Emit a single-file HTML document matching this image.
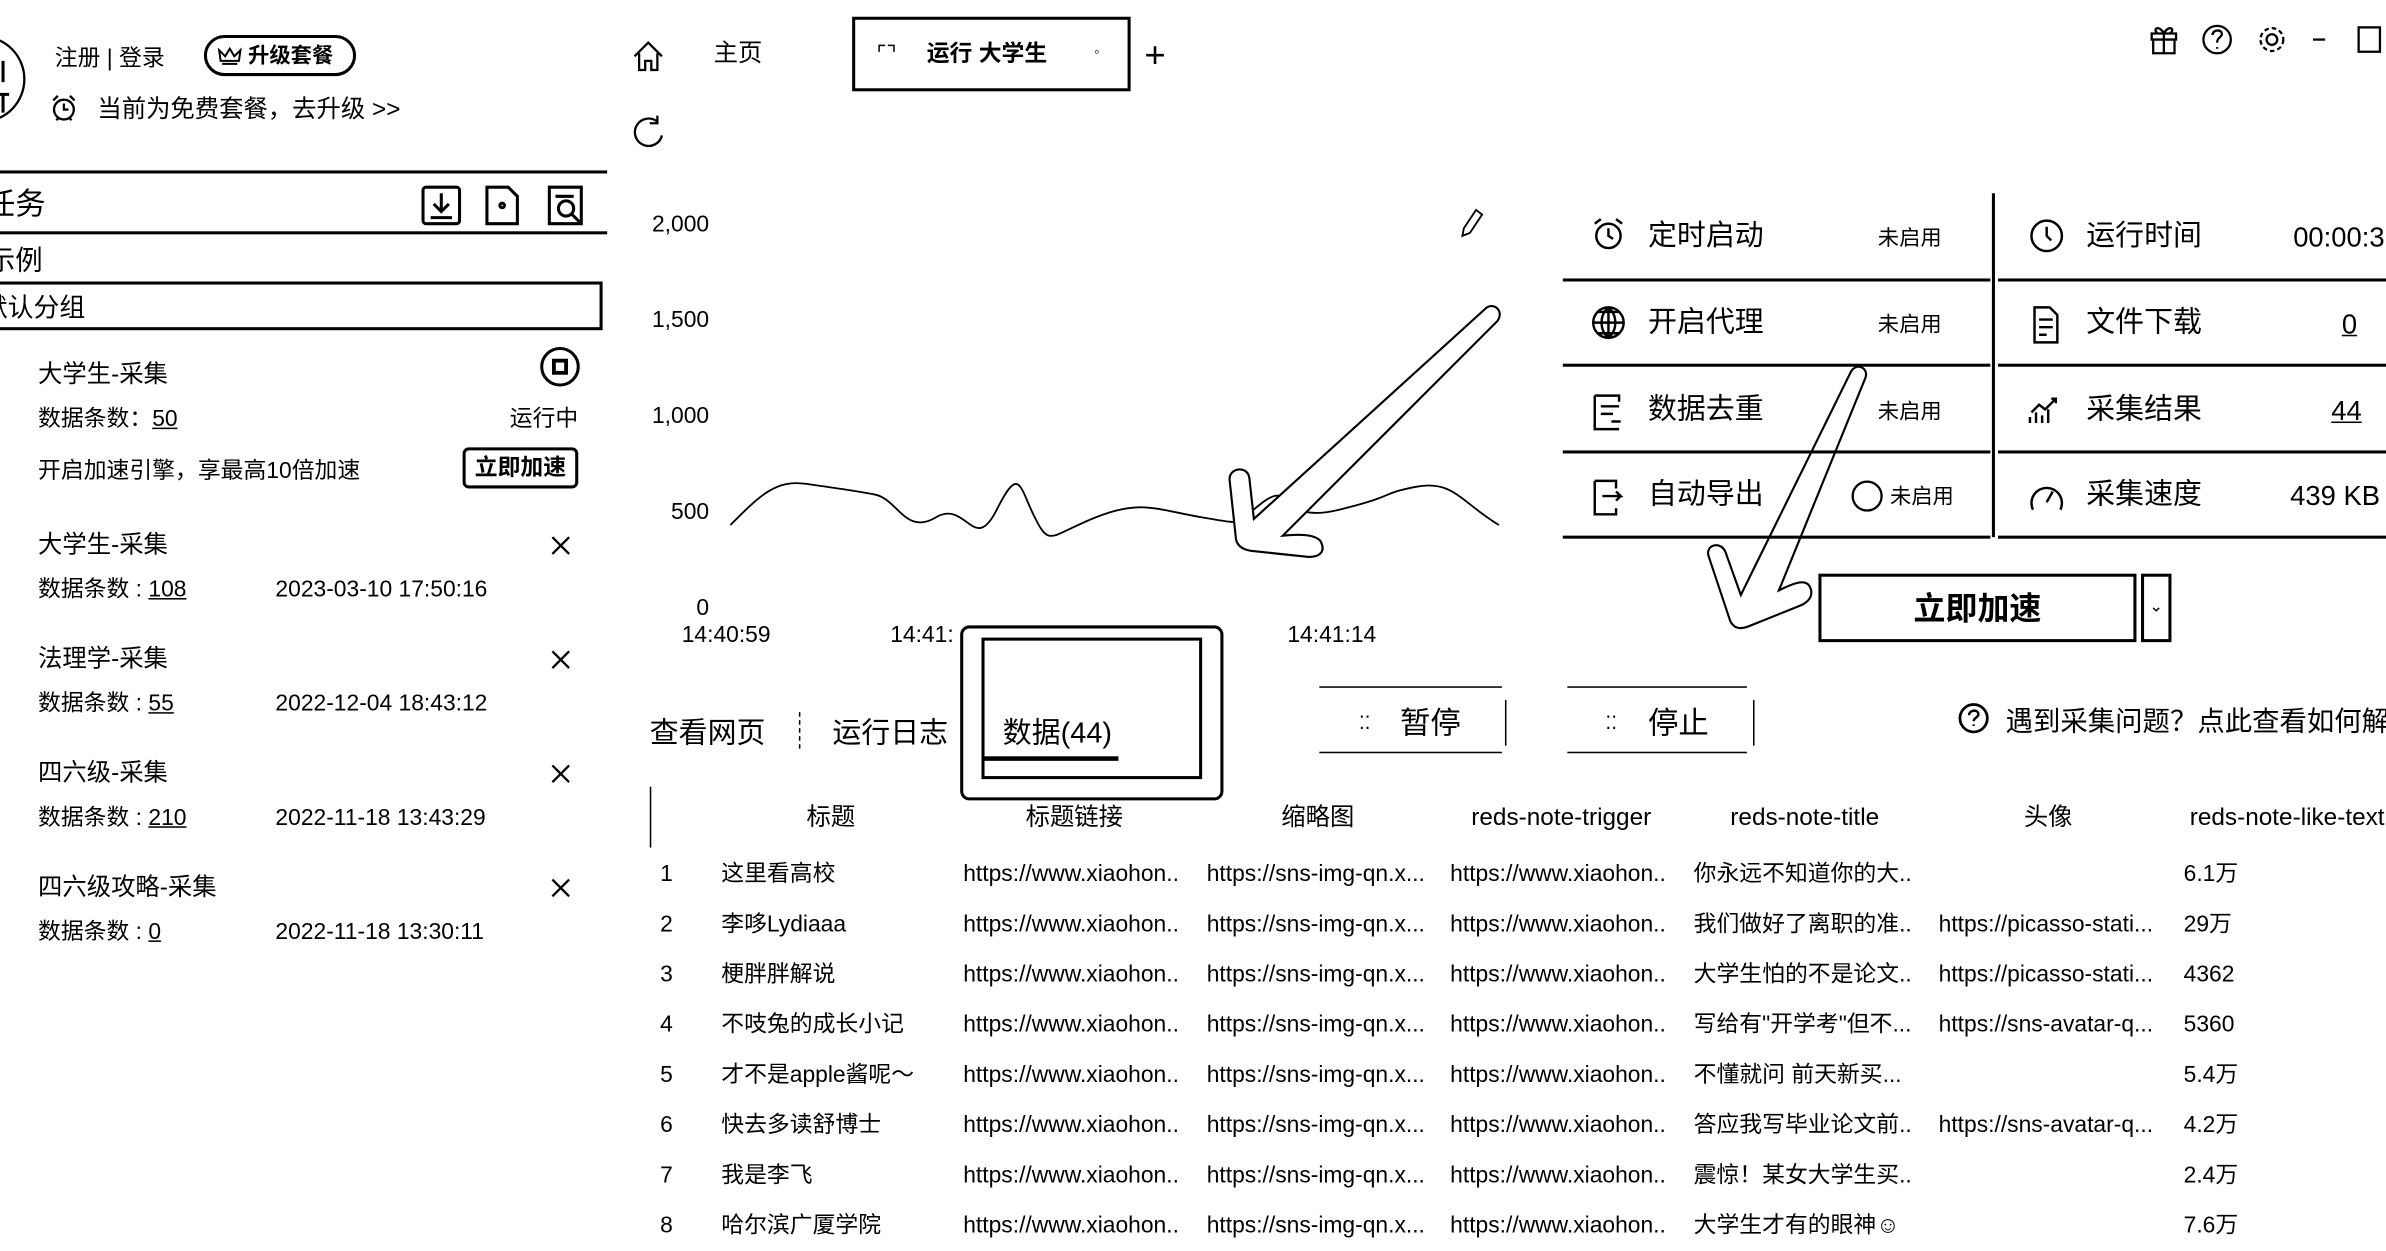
<!DOCTYPE html>
<html><head><meta charset="utf-8"><style>
html,body{margin:0;padding:0;background:#fff;overflow:hidden;width:2386px;height:1249px}
#w{position:absolute;left:0;top:0;width:1568px;height:821px;transform:scale(1.5217);transform-origin:0 0;font-family:"Liberation Sans","Noto Sans CJK SC",sans-serif;color:#000}
.a{position:absolute;white-space:nowrap;line-height:1}
.l{position:absolute;background:#000}
.u{text-decoration:underline}
svg{position:absolute;overflow:visible}
.t{font-size:15px}
</style></head><body><div id="w">
<!-- left panel -->
<svg style="left:0;top:0" width="20" height="90"><circle cx="-12" cy="52" r="28" fill="none" stroke="#000" stroke-width="1.5"/><path d="M2 40v14M2 62v12M0 62h6" stroke="#000" stroke-width="2" fill="none"/></svg>
<div class="a" style="left:36px;top:31px;font-size:15px">注册 | 登录</div>
<div class="a" style="left:134px;top:23px;width:100px;height:27px;border:2px solid #000;border-radius:15px;box-sizing:border-box"></div>
<svg style="left:143px;top:30px" width="16" height="14"><path d="M1 3l4 4 3-5 3 5 4-4-1 7H2z M3 12h10" stroke="#000" stroke-width="1.3" fill="none"/></svg>
<div class="a" style="left:163px;top:29px;font-size:14px;font-weight:bold">升级套餐</div>
<svg style="left:33px;top:62px" width="18" height="18"><circle cx="9" cy="10" r="6.5" fill="none" stroke="#000" stroke-width="1.5"/><path d="M9 6v4h3M2 4l3-3M16 4l-3-3M4 17l2-2M14 17l-2-2" stroke="#000" stroke-width="1.5" fill="none"/></svg>
<div class="a" style="left:64px;top:65px;font-size:16px">当前为免费套餐，去升级 &gt;&gt;</div>
<div class="l" style="left:0;top:112px;width:399px;height:2px"></div>
<div class="a" style="left:-10px;top:125px;font-size:20px">任务</div>
<svg style="left:277px;top:121px" width="110" height="28" fill="none" stroke="#000" stroke-width="2"><rect x="1" y="2" width="24" height="24" rx="2"/><path d="M13 6v12M8 13l5 5 5-5M6 22h14"/><path d="M43 2h14l6 6v18H43z"/><circle cx="53" cy="14" r="1.5"/><path d="M84 2h21v24H84z M88 8h12"/><circle cx="95" cy="16" r="5"/><path d="M99 20l5 5"/></svg>
<div class="l" style="left:0;top:152px;width:399px;height:2px"></div>
<div class="a" style="left:-8px;top:162px;font-size:18px">示例</div>
<div class="a" style="left:-2px;top:185px;width:398px;height:32px;border:2px solid #000;box-sizing:border-box"></div>
<div class="a" style="left:-12px;top:194px;font-size:17px">默认分组</div>
<div class="a" style="left:25px;top:239px;font-size:16px">大学生-采集</div>
<svg style="left:355px;top:228px" width="26" height="26"><circle cx="13" cy="13" r="12" fill="none" stroke="#000" stroke-width="2"/><rect x="9" y="9" width="8" height="8" fill="none" stroke="#000" stroke-width="2.5"/></svg>
<div class="a" style="left:25px;top:268px;font-size:15px">数据条数：<span class="u">50</span></div>
<div class="a" style="left:335px;top:268px;font-size:15px">运行中</div>
<div class="a" style="left:25px;top:302px;font-size:15px">开启加速引擎，享最高10倍加速</div>
<div class="a" style="left:304px;top:294px;width:76px;height:27px;border:2px solid #000;border-radius:4px;box-sizing:border-box;font-size:15px;font-weight:bold;text-align:center;line-height:23px">立即加速</div>
<div class="a" style="left:25px;top:351px;font-size:16px">大学生-采集</div>
<div class="a" style="left:25px;top:380px;font-size:15px">数据条数 : <span class="u">108</span></div>
<div class="a" style="left:181px;top:380px;font-size:15px">2023-03-10 17:50:16</div>
<div class="a" style="left:25px;top:426px;font-size:16px">法理学-采集</div>
<div class="a" style="left:25px;top:455px;font-size:15px">数据条数 : <span class="u">55</span></div>
<div class="a" style="left:181px;top:455px;font-size:15px">2022-12-04 18:43:12</div>
<div class="a" style="left:25px;top:501px;font-size:16px">四六级-采集</div>
<div class="a" style="left:25px;top:530px;font-size:15px">数据条数 : <span class="u">210</span></div>
<div class="a" style="left:181px;top:530px;font-size:15px">2022-11-18 13:43:29</div>
<div class="a" style="left:25px;top:576px;font-size:16px">四六级攻略-采集</div>
<div class="a" style="left:25px;top:605px;font-size:15px">数据条数 : <span class="u">0</span></div>
<div class="a" style="left:181px;top:605px;font-size:15px">2022-11-18 13:30:11</div>
<svg style="left:362px;top:352px" width="14" height="240" stroke="#000" stroke-width="1.5"><path d="M1 1l11 11M12 1L1 12M1 76l11 11M12 76L1 87M1 151l11 11M12 151L1 162M1 226l11 11M12 226L1 237"/></svg>
<!-- top tabs -->
<svg style="left:415px;top:26px" width="22" height="22" fill="none" stroke="#000" stroke-width="1.5"><path d="M2 11L11 2l9 9M5 9v11h4v-6h4v6h4V9"/></svg>
<div class="a" style="left:469px;top:28px;font-size:16px">主页</div>
<div class="a" style="left:560px;top:11px;width:183px;height:49px;border:2px solid #000;box-sizing:border-box"></div>
<div class="a" style="left:576px;top:28px;font-size:14px">⌜⌝</div>
<div class="a" style="left:609px;top:28px;font-size:15px;font-weight:bold">运行 大学生</div>
<div class="a" style="left:719px;top:30px;font-size:10px">◦</div>
<div class="a" style="left:752px;top:25px;font-size:24px">+</div>
<svg style="left:416px;top:75px" width="22" height="24" fill="none" stroke="#000" stroke-width="1.5"><path d="M16 5A9 9 0 1 0 19 14M16 1v5h-5"/></svg>
<svg style="left:1412px;top:14px" width="155" height="24" fill="none" stroke="#000" stroke-width="1.5"><path d="M2 8h16v4H2zM3 12h14v9H3zM10 8v13M10 8c-3-6-8-3-4 0M10 8c3-6 8-3 4 0"/><circle cx="45" cy="12" r="9"/><path d="M42 9c0-4 7-4 6 0-1 2-3 2-3 5M45 17v1"/><circle cx="81" cy="12" r="3.5"/><circle cx="81" cy="12" r="7.5" stroke-dasharray="3 2"/><path d="M108 12h8"/><rect x="138" y="4" width="14" height="16"/></svg>
<!-- chart -->
<div class="a" style="left:420px;top:140px;width:46px;text-align:right;font-size:15px">2,000</div>
<div class="a" style="left:420px;top:203px;width:46px;text-align:right;font-size:15px">1,500</div>
<div class="a" style="left:420px;top:266px;width:46px;text-align:right;font-size:15px">1,000</div>
<div class="a" style="left:420px;top:329px;width:46px;text-align:right;font-size:15px">500</div>
<div class="a" style="left:420px;top:392px;width:46px;text-align:right;font-size:15px">0</div>
<div class="a" style="left:448px;top:410px;font-size:15px">14:40:59</div>
<div class="a" style="left:585px;top:410px;font-size:15px">14:41:</div>
<div class="a" style="left:846px;top:410px;font-size:15px">14:41:14</div>
<svg style="left:0;top:0" width="1568" height="821" fill="none" stroke="#000" stroke-width="1.2"><path d="M480 345C500 325 510 315 530 318S560 322 575 325 595 352 615 340 640 365 655 335 670 320 680 340 690 352 720 340 760 335 790 340 810 345 830 330 840 345 880 335 905 325 930 320 960 330 985 345"/>
<path d="M962 150l8-12 4 3-8 12-5 2z"/>
<path d="M976 203c5-5 13 1 8 8L843 352c10-1 22-1 25 4 3 6 0 10-8 10l-38-4c-6-1-10-4-10-10l-4-37c0-8 12-9 13-1l3 27z" fill="#fff" stroke-width="1.4"/>
<path d="M1216 245c3-7 12-4 10 3l-57 140c8-4 17-8 20-3s1 10-6 13l-35 14c-6 2-9 0-11-4l-14-42c-3-8 8-11 11-3l10 28z" fill="#fff" stroke-width="1.4"/></svg>
<!-- stats grid -->
<div class="l" style="left:1027px;top:183px;width:281px;height:2px"></div><div class="l" style="left:1313px;top:183px;width:255px;height:2px"></div>
<div class="l" style="left:1027px;top:239px;width:281px;height:2px"></div><div class="l" style="left:1313px;top:239px;width:255px;height:2px"></div>
<div class="l" style="left:1027px;top:296px;width:281px;height:2px"></div><div class="l" style="left:1313px;top:296px;width:255px;height:2px"></div>
<div class="l" style="left:1027px;top:352px;width:281px;height:2px"></div><div class="l" style="left:1313px;top:352px;width:255px;height:2px"></div>
<div class="l" style="left:1309px;top:127px;width:2px;height:226px"></div>
<div class="a" style="left:1083px;top:146px;font-size:19px">定时启动</div>
<div class="a" style="left:1083px;top:203px;font-size:19px">开启代理</div>
<div class="a" style="left:1083px;top:260px;font-size:19px">数据去重</div>
<div class="a" style="left:1083px;top:316px;font-size:19px">自动导出</div>
<div class="a" style="left:1234px;top:149px;font-size:14px">未启用</div>
<div class="a" style="left:1234px;top:206px;font-size:14px">未启用</div>
<div class="a" style="left:1234px;top:263px;font-size:14px">未启用</div>
<div class="a" style="left:1242px;top:319px;font-size:14px">未启用</div>
<svg style="left:1216px;top:315px" width="24" height="22"><circle cx="11" cy="11" r="9.5" fill="none" stroke="#000" stroke-width="1.5"/></svg>
<div class="a" style="left:1371px;top:146px;font-size:19px">运行时间</div>
<div class="a" style="left:1371px;top:203px;font-size:19px">文件下载</div>
<div class="a" style="left:1371px;top:260px;font-size:19px">采集结果</div>
<div class="a" style="left:1371px;top:316px;font-size:19px">采集速度</div>
<div class="a" style="left:1507px;top:147px;font-size:18px">00:00:3</div>
<div class="a u" style="left:1539px;top:204px;font-size:18px">0</div>
<div class="a u" style="left:1532px;top:261px;font-size:18px">44</div>
<div class="a" style="left:1505px;top:317px;font-size:18px">439 KB</div>
<svg style="left:1045px;top:142px" width="320" height="200" fill="none" stroke="#000" stroke-width="1.6"><circle cx="12" cy="13" r="8"/><path d="M12 8v5l3 2M3 5l4-3M21 5l-4-3"/>
<circle cx="12" cy="70" r="10"/><path d="M2 70h20M12 60v20M5 63h14M5 77h14M12 60c-6 5-6 15 0 20c6-5 6-15 0-20"/>
<path d="M3 118h16v4M3 118v22h16M7 125h12M7 130h8M14 135h6"/>
<path d="M3 174h14v5M3 174v22h14v-4M8 184h12l-3-3M20 184l-3 3"/>
<circle cx="300" cy="13" r="10"/><path d="M300 7v6l3 3"/>
<path d="M292 60h10l5 5v18h-15zM295 68h9M295 73h9M295 78h5"/>
<path d="M289 136v-4M293 136v-7M297 136v-5M301 136v-9M290 129l5-5 4 3 7-7M303 120h3v3"/>
<path d="M291 193a10 10 0 1 1 18 0"/><path d="M300 188l4-7"/></svg>
<div class="a" style="left:1195px;top:377px;width:209px;height:45px;border:2px solid #000;box-sizing:border-box;font-size:21px;font-weight:bold;text-align:center;line-height:43px">立即加速</div>
<div class="a" style="left:1407px;top:377px;width:20px;height:45px;border:2px solid #000;box-sizing:border-box;font-size:11px;text-align:center;line-height:41px">⌄</div>
<!-- tabs row -->
<div class="a" style="left:427px;top:473px;font-size:19px">查看网页</div>
<div class="a" style="left:525px;top:468px;width:0;height:24px;border-left:1px dashed #000"></div>
<div class="a" style="left:547px;top:473px;font-size:19px">运行日志</div>
<div class="a" style="left:631px;top:411px;width:173px;height:115px;border:2px solid #000;border-radius:6px;box-sizing:border-box"></div>
<div class="a" style="left:645px;top:419px;width:145px;height:93px;border:2px solid #000;box-sizing:border-box"></div>
<div class="a" style="left:659px;top:473px;font-size:19px">数据(44)</div>
<div class="l" style="left:645px;top:497px;width:90px;height:3px"></div>
<div class="l" style="left:867px;top:451px;width:120px;height:1px"></div><div class="l" style="left:867px;top:494px;width:120px;height:1px"></div>
<div class="l" style="left:989px;top:460px;width:1px;height:30px"></div>
<div class="a" style="left:893px;top:469px;font-size:12px">⁚⁚</div>
<div class="a" style="left:920px;top:466px;font-size:20px">暂停</div>
<div class="l" style="left:1030px;top:451px;width:118px;height:1px"></div><div class="l" style="left:1030px;top:494px;width:118px;height:1px"></div>
<div class="l" style="left:1152px;top:460px;width:1px;height:30px"></div>
<div class="a" style="left:1055px;top:469px;font-size:12px">⁚⁚</div>
<div class="a" style="left:1083px;top:466px;font-size:20px">停止</div>
<svg style="left:1287px;top:462px" width="22" height="22"><circle cx="10" cy="10" r="9" fill="none" stroke="#000" stroke-width="1.8"/><path d="M7 8c0-4 7-4 6 0-1 2-3 2-3 4M10 14v1" stroke="#000" stroke-width="1.6" fill="none"/></svg>
<div class="a" style="left:1318px;top:465px;font-size:18px">遇到采集问题？点此查看如何解决</div>
<!-- table -->
<div class="l" style="left:427px;top:517px;width:1px;height:40px"></div>
<div class="a t" style="left:466px;top:530px;width:160px;text-align:center;font-size:16px">标题</div>
<div class="a t" style="left:626px;top:530px;width:160px;text-align:center;font-size:16px">标题链接</div>
<div class="a t" style="left:786px;top:530px;width:160px;text-align:center;font-size:16px">缩略图</div>
<div class="a t" style="left:946px;top:530px;width:160px;text-align:center;font-size:16px">reds-note-trigger</div>
<div class="a t" style="left:1106px;top:530px;width:160px;text-align:center;font-size:16px">reds-note-title</div>
<div class="a t" style="left:1266px;top:530px;width:160px;text-align:center;font-size:16px">头像</div>
<div class="a t" style="left:1439px;top:530px;font-size:16px">reds-note-like-text</div>
<div class="a t" style="left:433px;top:558px;line-height:33px;text-align:center;width:10px;white-space:normal">1 2 3 4 5 6 7 8</div>
<div class="a t" style="left:474px;top:558px;line-height:33px">这里看高校<br>李哆Lydiaaa<br>梗胖胖解说<br>不吱兔的成长小记<br>才不是apple酱呢～<br>快去多读舒博士<br>我是李飞<br>哈尔滨广厦学院</div>
<div class="a t" style="left:633px;top:558px;line-height:33px">https://www.xiaohon..<br>https://www.xiaohon..<br>https://www.xiaohon..<br>https://www.xiaohon..<br>https://www.xiaohon..<br>https://www.xiaohon..<br>https://www.xiaohon..<br>https://www.xiaohon..</div>
<div class="a t" style="left:793px;top:558px;line-height:33px">https://sns-img-qn.x...<br>https://sns-img-qn.x...<br>https://sns-img-qn.x...<br>https://sns-img-qn.x...<br>https://sns-img-qn.x...<br>https://sns-img-qn.x...<br>https://sns-img-qn.x...<br>https://sns-img-qn.x...</div>
<div class="a t" style="left:953px;top:558px;line-height:33px">https://www.xiaohon..<br>https://www.xiaohon..<br>https://www.xiaohon..<br>https://www.xiaohon..<br>https://www.xiaohon..<br>https://www.xiaohon..<br>https://www.xiaohon..<br>https://www.xiaohon..</div>
<div class="a t" style="left:1113px;top:558px;line-height:33px">你永远不知道你的大..<br>我们做好了离职的准..<br>大学生怕的不是论文..<br>写给有"开学考"但不...<br>不懂就问 前天新买...<br>答应我写毕业论文前..<br>震惊！某女大学生买..<br>大学生才有的眼神☺</div>
<div class="a t" style="left:1274px;top:558px;line-height:33px"><br>https://picasso-stati...<br>https://picasso-stati...<br>https://sns-avatar-q...<br><br>https://sns-avatar-q...</div>
<div class="a t" style="left:1435px;top:558px;line-height:33px">6.1万<br>29万<br>4362<br>5360<br>5.4万<br>4.2万<br>2.4万<br>7.6万</div>
</div></body></html>
